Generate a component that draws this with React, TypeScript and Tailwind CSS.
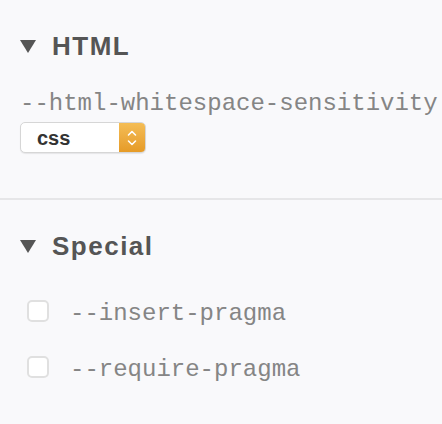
import React from "react";

const MONO = "font-['Liberation_Mono',monospace]";
const SANS = "font-['Liberation_Sans',Arial,sans-serif]";

function Caret() {
  return (
    <svg className="w-4 h-[13px] shrink-0" viewBox="0 0 16 13">
      <polygon points="0,0 16,0 8,13" fill="#555555" />
    </svg>
  );
}

function SectionTitle({ children }: { children: React.ReactNode }) {
  return (
    <div className="flex items-center gap-4 h-7">
      <Caret />
      <h2 className={`${SANS} text-[26px] leading-[28px] tracking-[1.5px] font-bold text-[#555555]`}>{children}</h2>
    </div>
  );
}

function Select({ value }: { value: string }) {
  return (
    <div className="mt-1 flex w-[126px] h-[31px] rounded-[5px] bg-white border border-[#d6d6d6] shadow-[0_1px_1px_rgba(0,0,0,0.08)] overflow-hidden">
      <div className={`${SANS} flex-1 flex items-center pl-4 text-[20px] font-bold text-[#333333]`}>{value}</div>
      <div className="w-[26px] flex items-center justify-center bg-gradient-to-b from-[#f4bd55] to-[#e69b26]">
        <svg className="w-[10px] h-[18px]" viewBox="0 0 10 18" fill="none" stroke="white" strokeWidth={1.6} strokeLinecap="round" strokeLinejoin="round">
          <path d="M1.5 6 L5 2.5 L8.5 6" />
          <path d="M1.5 12 L5 15.5 L8.5 12" />
        </svg>
      </div>
    </div>
  );
}

function Checkbox({ label }: { label: string }) {
  return (
    <div className="flex items-start h-7 pl-[27px]">
      <div className="w-[22px] h-[22px] rounded-[5px] bg-white border-2 border-[#e0e0e0] shrink-0" />
      <span className={`${MONO} ml-[21px] text-[24px] leading-[28px] text-[#858585] whitespace-nowrap`}>{label}</span>
    </div>
  );
}

export default function App() {
  return (
    <div className="w-[442px] h-[424px] bg-[#f9f9fb] overflow-hidden">
      {/* HTML */}
      <section className="pt-8 pl-5 pb-[45px]">
        <SectionTitle>HTML</SectionTitle>
        <div className="mt-[30px]">
          <p className={`${MONO} text-[24px] leading-[28px] text-[#858585] whitespace-nowrap`}>--html-whitespace-sensitivity</p>
          <Select value="css" />
        </div>
      </section>

      <div className="h-[2px] bg-[#e6e6e8]" />

      {/* Special */}
      <section className="pt-8">
        <div className="pl-5">
          <SectionTitle>Special</SectionTitle>
        </div>
        <div className="mt-10 flex flex-col gap-7">
          <Checkbox label="--insert-pragma" />
          <Checkbox label="--require-pragma" />
        </div>
      </section>
    </div>
  );
}
